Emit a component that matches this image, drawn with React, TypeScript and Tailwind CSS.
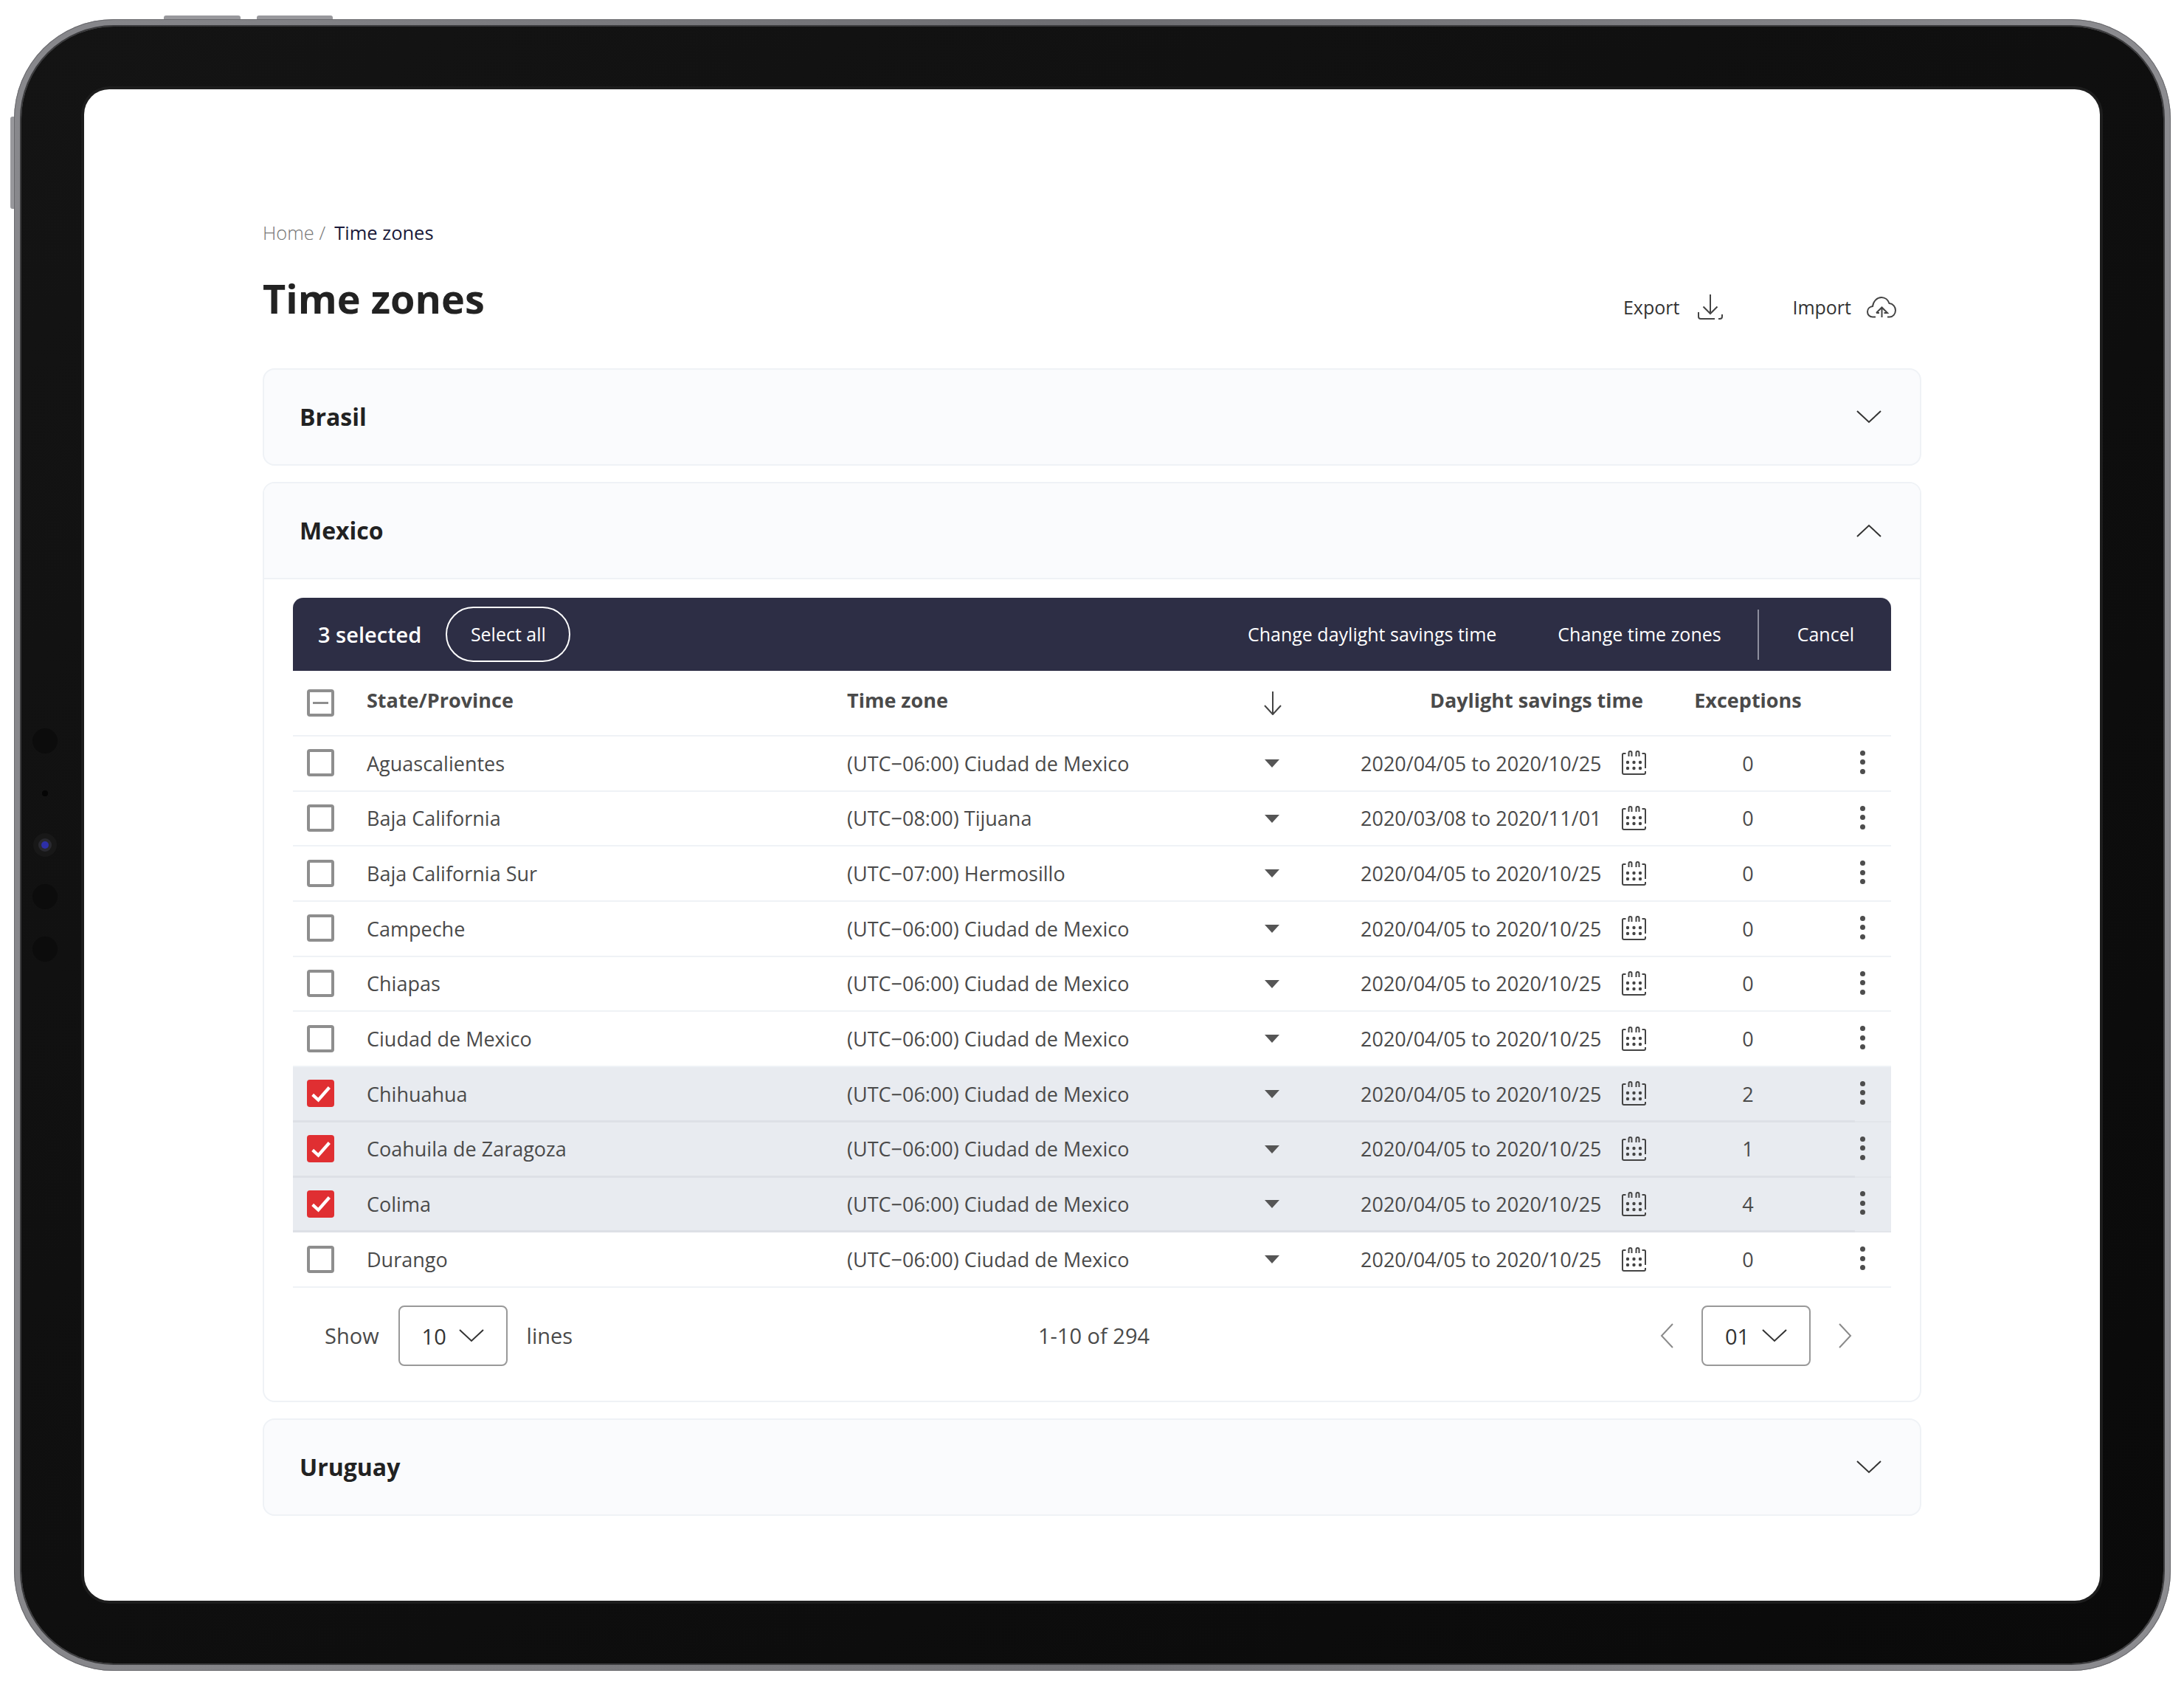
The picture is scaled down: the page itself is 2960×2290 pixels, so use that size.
type Row = {
  name: string;
  zone: string;
  range: string;
  exceptions: string;
  checked?: boolean;
};

const rows: Row[] = [
  { name: "Aguascalientes", zone: "(UTC−06:00) Ciudad de Mexico", range: "2020/04/05 to 2020/10/25", exceptions: "0" },
  { name: "Baja California", zone: "(UTC−08:00) Tijuana", range: "2020/03/08 to 2020/11/01", exceptions: "0" },
  { name: "Baja California Sur", zone: "(UTC−07:00) Hermosillo", range: "2020/04/05 to 2020/10/25", exceptions: "0" },
  { name: "Campeche", zone: "(UTC−06:00) Ciudad de Mexico", range: "2020/04/05 to 2020/10/25", exceptions: "0" },
  { name: "Chiapas", zone: "(UTC−06:00) Ciudad de Mexico", range: "2020/04/05 to 2020/10/25", exceptions: "0" },
  { name: "Ciudad de Mexico", zone: "(UTC−06:00) Ciudad de Mexico", range: "2020/04/05 to 2020/10/25", exceptions: "0" },
  { name: "Chihuahua", zone: "(UTC−06:00) Ciudad de Mexico", range: "2020/04/05 to 2020/10/25", exceptions: "2", checked: true },
  { name: "Coahuila de Zaragoza", zone: "(UTC−06:00) Ciudad de Mexico", range: "2020/04/05 to 2020/10/25", exceptions: "1", checked: true },
  { name: "Colima", zone: "(UTC−06:00) Ciudad de Mexico", range: "2020/04/05 to 2020/10/25", exceptions: "4", checked: true },
  { name: "Durango", zone: "(UTC−06:00) Ciudad de Mexico", range: "2020/04/05 to 2020/10/25", exceptions: "0" },
];

function Chevron({ up = false, className = "" }: { up?: boolean; className?: string }) {
  return (
    <svg viewBox="0 0 34 18" fill="none" className={className}>
      <path
        d={up ? "M1 17 L17 2 L33 17" : "M1 1 L17 16 L33 1"}
        stroke="#333"
        strokeWidth="2"
      />
    </svg>
  );
}

function Side({ left = false }: { left?: boolean }) {
  return (
    <svg viewBox="0 0 18 34" fill="none" className="h-[34px] w-[18px]">
      <path d={left ? "M17 1 L2 17 L17 33" : "M1 1 L16 17 L1 33"} stroke="#8a8a8a" strokeWidth="2" />
    </svg>
  );
}

function ExportIcon() {
  return (
    <svg viewBox="0 0 34 34" fill="none" className="h-[34px] w-[34px]" stroke="#444" strokeWidth="2">
      <path d="M17 0 V26" />
      <path d="M7.5 16.5 L17 26 L26.5 16.5" />
      <path d="M1 24 V30 Q1 33 4 33 H23" />
      <path d="M28 33 H30 Q33 33 33 30 V27" />
    </svg>
  );
}

function CloudIcon() {
  return (
    <svg viewBox="0 0 40 29" fill="none" className="h-[29px] w-[40px]" stroke="#444" strokeWidth="2">
      <path d="M12 27.5 H8 C4 27.5 1 24.5 1 20.5 C1 16.5 4 13.5 8 13 C9 6 14 1 20 1 C25 1 29 4.5 30.5 9 C35.5 9.5 39 13.5 39 18.5 C39 23.5 35.5 27.5 31 27.5 H28" />
      <path d="M13 22 L20.5 14.5 L28 22 H23.5 M20.5 15 V28 M13 22 H17" />
    </svg>
  );
}

function Calendar() {
  return (
    <svg viewBox="0 0 33 33" fill="none" className="h-[33px] w-[33px]" stroke="#444" strokeWidth="2">
      <path d="M5.5 4 H2.5 Q1 4 1 5.5 V30 Q1 32 3 32 H30 Q32 32 32 30 V28" />
      <path d="M32 24 V5.5 Q32 4 30.5 4 H27.5" />
      <path d="M9.5 8 V3 Q9.5 1 11.5 1 Q13.5 1 13.5 3 V8" />
      <path d="M19.5 8 V3 Q19.5 1 21.5 1 Q23.5 1 23.5 3 V8" />
      <g fill="#444" stroke="none">
        <circle cx="8" cy="16" r="2.2" />
        <circle cx="16.5" cy="16" r="2.2" />
        <circle cx="25" cy="16" r="2.2" />
        <circle cx="8" cy="24" r="2.2" />
        <circle cx="16.5" cy="24" r="2.2" />
        <circle cx="25" cy="24" r="2.2" />
      </g>
    </svg>
  );
}

function Box({ state }: { state?: "checked" | "mixed" }) {
  if (state === "checked") {
    return (
      <span className="flex h-[37px] w-[37px] items-center justify-center rounded-[4px] bg-[#e02f32]">
        <svg viewBox="0 0 24 24" fill="none" className="h-[34px] w-[34px]">
          <path d="M4 13 L9.5 18 L20 6" stroke="#fff" strokeWidth="3" />
        </svg>
      </span>
    );
  }
  return (
    <span className="flex h-[37px] w-[37px] items-center justify-center rounded-[4px] border-[4px] border-[#8e8e8e] bg-white">
      {state === "mixed" && <span className="h-[3px] w-[21px] bg-[#8e8e8e]" />}
    </span>
  );
}

function Accordion({ title }: { title: string }) {
  return (
    <div className="flex h-[132px] items-center justify-between rounded-[16px] border-2 border-[#eff2f6] bg-[#fafbfd] pl-[48px] pr-[52px]">
      <h2 className="text-[32px] font-bold text-[#222]">{title}</h2>
      <Chevron className="h-[18px] w-[34px]" />
    </div>
  );
}

function TableRow({ row }: { row: Row }) {
  return (
    <div className={row.checked ? "bg-[#e8ebf0]" : ""}>
      <div className="grid h-[71.7px] grid-cols-[100px_651px_552px_48px_96px_340px_60px_250px_56px_12px] items-center text-[27px] text-[#4a4a4a]">
        <div className="pl-[19px]">
          <Box state={row.checked ? "checked" : undefined} />
        </div>
        <div className="pt-[2px]">{row.name}</div>
        <div className="pt-[2px]">{row.zone}</div>
        <div className="flex justify-center pt-[1px]">
          <span className="h-0 w-0 border-x-[10.5px] border-t-[11px] border-x-transparent border-t-[#555]" />
        </div>
        <div />
        <div className="pt-[2px]">{row.range}</div>
        <div className="flex justify-center">
          <Calendar />
        </div>
        <div className="pt-[2px] text-center">{row.exceptions}</div>
        <div className="flex flex-col items-center gap-[5.5px] pb-[2px] pl-[4px]">
          <span className="h-[7px] w-[7px] rounded-full bg-[#4d4d4d]" />
          <span className="h-[7px] w-[7px] rounded-full bg-[#4d4d4d]" />
          <span className="h-[7px] w-[7px] rounded-full bg-[#4d4d4d]" />
        </div>
      </div>
      <div className="flex">
        <div className={row.checked ? "h-[3px] w-[2117px] bg-[#dde0e6]" : "h-[3px] w-[2117px] border-b-2 border-[#eff2f6]"} />
        <div className={row.checked ? "h-[3px] flex-1 border-b-2 border-[#e2e5ea]" : "h-[3px] flex-1 border-b-2 border-[#eff2f6]"} />
      </div>
    </div>
  );
}

function Select({ value }: { value: string }) {
  return (
    <div className="flex h-[82px] w-[148px] items-center gap-[17px] rounded-[8px] border-2 border-[#999] pl-[30px] text-[29px] text-[#333]">
      <span className="pt-[2px]">{value}</span>
      <Chevron className="h-[18px] w-[34px]" />
    </div>
  );
}

export default function App() {
  return (
    <div
      className="relative h-[2290px] w-[2960px] overflow-hidden bg-white pl-[19px] pt-[26px]"
      style={{ fontFamily: '"Open Sans", sans-serif' }}
    >
      {/* hardware buttons */}
      <div className="absolute left-[222px] top-[21px] h-[8px] w-[104px] rounded-t-[3px] bg-[#98989c]" />
      <div className="absolute left-[348px] top-[21px] h-[8px] w-[103px] rounded-t-[3px] bg-[#98989c]" />
      <div className="absolute left-[14px] top-[158px] h-[125px] w-[8px] rounded-l-[3px] bg-[#98989c]" />

      <div className="relative h-[2238px] w-[2923px] rounded-[135px] bg-gradient-to-r from-[#88888c] via-[#6e6e72] to-[#8c8c90] p-[10px] shadow-[inset_0_0_0_1px_#6a6a6e]">
        <div className="h-[2218px] w-[2903px] rounded-[125px] bg-gradient-to-br from-[#141414] to-[#0a0a0a] p-[85px] shadow-[0_0_0_2px_#3c3c3e]">
          {/* cameras and sensors */}
          <div className="absolute left-[25px] top-[961px] h-[34px] w-[34px] rounded-full bg-[#0c0c0c]" />
          <div className="absolute left-[38px] top-[1045px] h-[8px] w-[8px] rounded-full bg-[#050505]" />
          <div className="absolute left-[26px] top-[1103px] flex h-[32px] w-[32px] items-center justify-center rounded-full bg-[#181818]">
            <span className="flex h-[18px] w-[18px] items-center justify-center rounded-full bg-[#2a2a30]">
              <span className="h-[10px] w-[10px] rounded-full bg-[#2d2fa8]" />
            </span>
          </div>
          <div className="absolute left-[25px] top-[1172px] h-[34px] w-[34px] rounded-full bg-[#0c0c0c]" />
          <div className="absolute left-[25px] top-[1243px] h-[34px] w-[34px] rounded-full bg-[#0c0c0c]" />

          <div className="h-[2048px] w-[2732px] rounded-[34px] bg-white px-[242px] pt-[177px] shadow-[0_0_0_4px_#1d1d1d]">
            <div className="flex gap-[12px] text-[25.5px] leading-[34px] text-[#777]">
              <span className="font-light">Home /</span>
              <span className="text-[#1a1a3a]">Time zones</span>
            </div>

            <div className="mt-[34px] flex items-center justify-between">
              <h1 className="text-[54px] font-bold leading-[76px] text-[#222]">Time zones</h1>
              <div className="flex items-center pr-[34px] pt-[24px] text-[25px] text-[#333]">
                <span className="pt-[2px]">Export</span>
                <span className="ml-[25px]">
                  <ExportIcon />
                </span>
                <span className="ml-[94px] pt-[2px]">Import</span>
                <span className="ml-[21px]">
                  <CloudIcon />
                </span>
              </div>
            </div>

            <div className="mt-[57px] flex flex-col gap-[22px]">
              <Accordion title="Brasil" />

              <div className="overflow-hidden rounded-[16px] border-2 border-[#eff2f6]">
                <div className="flex h-[130px] items-center justify-between border-b-2 border-[#eff2f6] bg-[#fafbfd] pl-[48px] pr-[52px]">
                  <h2 className="text-[32px] font-bold text-[#222]">Mexico</h2>
                  <Chevron up className="h-[18px] w-[34px]" />
                </div>

                <div className="px-[39px] pt-[25px]">
                  <div className="flex h-[99px] items-center rounded-t-[14px] bg-[#2d2e45] pl-[34px] pr-[50px] text-white">
                    <span className="text-[29px] font-semibold">3 selected</span>
                    <button className="ml-[33px] flex h-[75px] w-[169px] items-center justify-center rounded-full border-2 border-white text-[25px]">
                      Select all
                    </button>
                    <div className="ml-auto flex items-center text-[25px]">
                      <span>Change daylight savings time</span>
                      <span className="ml-[83px]">Change time zones</span>
                      <span className="ml-[49px] h-[68px] w-[2px] bg-[#8d8e9d]" />
                      <span className="ml-[52px]">Cancel</span>
                    </div>
                  </div>

                  <div className="grid h-[89px] grid-cols-[100px_651px_552px_48px_496px_250px_68px] items-center border-b-2 border-[#eff2f6] text-[27px] font-bold text-[#4a4a4a]">
                    <div className="pl-[19px]">
                      <Box state="mixed" />
                    </div>
                    <div className="pb-[6px]">State/Province</div>
                    <div className="pb-[6px]">Time zone</div>
                    <div className="flex justify-center pl-[1px]">
                      <svg viewBox="0 0 24 32" fill="none" className="h-[32px] w-[24px]">
                        <path d="M12 0 V31 M1 19 L12 31 L23 19" stroke="#444" strokeWidth="2" />
                      </svg>
                    </div>
                    <div className="pb-[6px] pr-[17px] text-right">Daylight savings time</div>
                    <div className="pb-[6px] text-center">Exceptions</div>
                    <div />
                  </div>

                  {rows.map((row) => (
                    <TableRow key={row.name} row={row} />
                  ))}

                  <div className="grid grid-cols-3 items-center pl-[43px] pr-[38px] pt-[24px] text-[29px] text-[#4a4a4a]">
                    <div className="flex items-center">
                      <span>Show</span>
                      <span className="ml-[26px]">
                        <Select value="10" />
                      </span>
                      <span className="ml-[26px]">lines</span>
                    </div>
                    <div className="text-center">1-10 of 294</div>
                    <div className="flex items-center justify-end gap-[38px] pr-[15px]">
                      <Side left />
                      <Select value="01" />
                      <Side />
                    </div>
                  </div>
                  <div className="h-[47px]" />
                </div>
              </div>

              <Accordion title="Uruguay" />
            </div>
          </div>
        </div>
      </div>
    </div>
  );
}
